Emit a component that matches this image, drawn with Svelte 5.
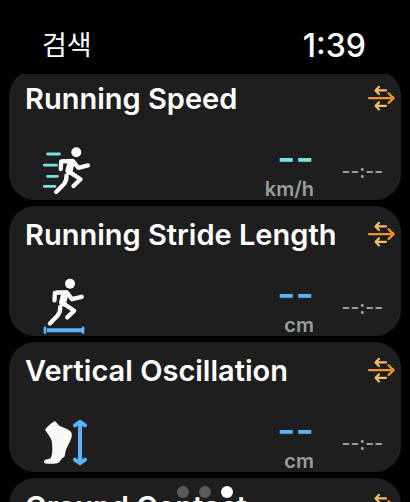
<script lang="ts">
  type Metric = {
    name: string;
    icon: "speed" | "stride" | "oscillation" | "contact";
    unit: string;
    color: string;
  };

  const metrics: Metric[] = [
    { name: "Running Speed", icon: "speed", unit: "km/h", color: "teal" },
    { name: "Running Stride Length", icon: "stride", unit: "cm", color: "blue" },
    { name: "Vertical Oscillation", icon: "oscillation", unit: "cm", color: "blue" },
    { name: "Ground Contact", icon: "contact", unit: "ms", color: "blue" },
  ];

  const pages = [1, 2, 3];
  let current = $state(3);
</script>

<svelte:head>
  <title>검색</title>
</svelte:head>

{#snippet runner()}
  <circle class="solid" cx="34.3" cy="8.3" r="5" />
  <path class="limb" d="M18.8 25 L19.2 17.4 L31 17 L36.3 23.8 L46 21.4" />
  <path class="solid" d="M20 15 L31 15 Q34 16.5 32.5 20 L30.5 27.5 L33 31 L26 31 Q22 28 24 24 L25.5 18 Z" />
  <path class="limb" d="M27 27.6 L38.5 35.3 L31.5 42" />
  <path class="limb" d="M24.4 31.6 Q25 36 22 40 L14.2 48" />
{/snippet}

<main>
  <header>
    <button type="button" class="back">검색</button>
    <time datetime="13:39">1:39</time>
  </header>

  <div class="viewport">
    <ul>
      {#each metrics as metric (metric.name)}
        <li>
          <div class="top">
            <h2>{metric.name}</h2>
            <button type="button" class="swap" aria-label="Change {metric.name}">
              <svg viewBox="0 0 28 28" width="28" height="28">
                <path class="minor" d="M19 5.4 H9 M12 1.8 L8.6 5.4 L12 9" />
                <path class="minor" d="M19 20.8 H9 M12 17.2 L8.6 20.8 L12 24.4" />
                <path class="major" d="M2 13.1 H26.6 M21.6 8.2 L26.6 13.1 L21.6 18" />
              </svg>
            </button>
          </div>

          <div class="reading {metric.color}">
            <svg class="icon" viewBox="0 0 50 54" width="50" height="54" aria-hidden="true">
              {#if metric.icon === "speed"}
                <path class="lines" d="M5.5 10 H17.5 M2.3 21.2 H14.5 M5.5 32.3 H15.5 M2.3 42.4 H13" />
                {@render runner()}
              {:else if metric.icon === "stride"}
                <g transform="translate(-6.3 -4.6)">{@render runner()}</g>
                <path class="bar" d="M5 50.2 H40" />
                <path class="lines" d="M3 48 V52.6 M41 48 V52.6" />
              {:else if metric.icon === "oscillation"}
                <path
                  class="foot"
                  d="M13 5 Q14 6 17.3 9.7 L23 12.3 Q28 14 29.6 17 Q30.6 19.5 28 25.5 L24.2 33 Q23.2 36 22.6 40.5 Q19 42.5 17.6 46 Q16 47.8 12 47.8 H5 Q1.6 47.6 2 45.2 Q2.4 43.4 5.5 43.2 L8.6 42.2 Q10.8 38 10.2 31 Q10.4 24 7.6 20.5 L3 13.8 Q6 9 13 5 Z"
                />
                <path class="arrow" d="M38 6 V47 M33 9.4 L38 5.8 L43 9.4 M33 43.6 L38 47.2 L43 43.6" />
              {:else}
                <g transform="translate(-6.3 -4.6)">{@render runner()}</g>
              {/if}
            </svg>
            <p class="value">
              <span class="number">--</span>
              <span class="unit">{metric.unit}</span>
            </p>
            <p class="pace">--:--</p>
          </div>
        </li>
      {/each}
    </ul>
  </div>

  <nav>
    {#each pages as page (page)}
      <button
        type="button"
        class="dot"
        class:active={page === current}
        aria-label="Page {page}"
        onclick={() => (current = page)}
      ></button>
    {/each}
  </nav>
</main>

<style>
  :global(body) {
    background: #000;
  }

  main {
    position: relative;
    display: flex;
    flex-direction: column;
    height: 100vh;
    overflow: hidden;
    background: #000;
    color: #fff;
    font-family: Inter, "Noto Sans CJK KR", sans-serif;
  }

  button {
    padding: 0;
    border: 0;
    background: none;
    color: inherit;
    font: inherit;
    cursor: pointer;
  }

  header {
    display: flex;
    justify-content: space-between;
    align-items: center;
    padding: 28px 44px 10px 42px;
    line-height: 36px;
  }

  .back {
    font-size: 27px;
  }

  time {
    font-size: 32px;
    font-weight: 500;
  }

  .viewport {
    flex: 1;
    min-height: 0;
    overflow: hidden;
  }

  /* the list rests slightly scrolled under the header */
  ul {
    display: flex;
    flex-direction: column;
    gap: 6px;
    margin: -4px 9px 0;
    padding: 0;
    list-style: none;
  }

  li {
    box-sizing: border-box;
    flex-shrink: 0;
    padding: 12px 6px 0 16px;
    border-radius: 26px;
    background: #1e1e1e;
  }

  .top {
    display: flex;
    justify-content: space-between;
    align-items: center;
  }

  h2 {
    margin: 0;
    font-size: 29px;
    font-weight: 600;
    line-height: 34px;
    white-space: nowrap;
  }

  .swap {
    display: flex;
  }

  .swap path {
    fill: none;
    stroke-linecap: round;
    stroke-linejoin: round;
    stroke-width: 2.2;
  }

  .swap .minor {
    stroke: #f3bc6c;
  }

  .swap .major {
    stroke: #f2952f;
  }

  .reading {
    display: flex;
    align-items: flex-end;
    margin-top: 24px;
    padding: 0 12px 0 17px;
  }

  .teal {
    --accent: #76e2e2;
  }

  .blue {
    --accent: #5ab4f8;
  }

  .icon {
    margin-bottom: 2px;
    overflow: visible;
    fill: none;
    stroke-linecap: round;
    stroke-linejoin: round;
  }

  .solid,
  .foot {
    fill: #fbfaf6;
  }

  .limb {
    stroke: #fbfaf6;
    stroke-width: 4.3;
  }

  .lines {
    stroke: var(--accent);
    stroke-width: 2.8;
  }

  .bar,
  .arrow {
    stroke: var(--accent);
    stroke-width: 4;
  }

  .bar {
    stroke-linecap: butt;
  }

  .value {
    display: flex;
    flex: 1;
    flex-direction: column;
    gap: 2px;
    align-items: flex-end;
    margin: 0;
  }

  .number {
    color: var(--accent);
    font-size: 40px;
    font-weight: 500;
    line-height: 36px;
  }

  .unit {
    color: #949f9e;
    font-size: 20px;
    font-weight: 600;
    line-height: 22px;
  }

  .pace {
    width: 69px;
    margin: 0 0 16px;
    color: #949f9e;
    font-size: 19px;
    font-weight: 600;
    line-height: 24px;
    text-align: right;
  }

  nav {
    position: absolute;
    right: 0;
    bottom: 4px;
    left: 0;
    display: flex;
    justify-content: center;
    gap: 10px;
  }

  .dot {
    width: 12px;
    height: 12px;
    border-radius: 50%;
    background: #5a5a5a;
  }

  .dot.active {
    background: #fff;
  }
</style>
